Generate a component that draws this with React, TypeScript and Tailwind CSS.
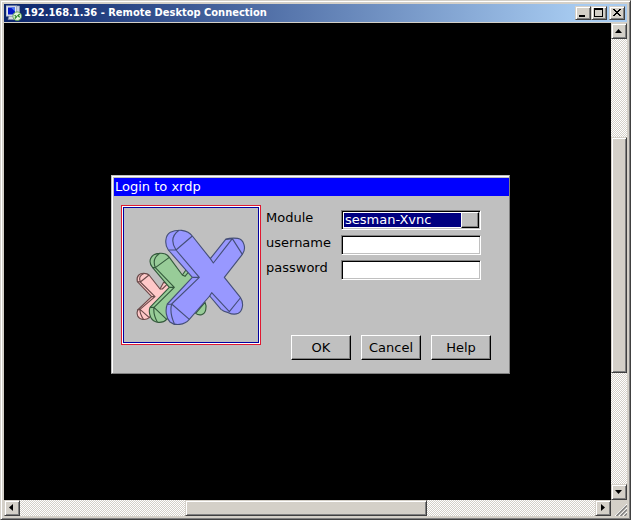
import type { ReactNode } from 'react';

const RAISED =
  'border border-t-[#d4d0c8] border-l-[#d4d0c8] border-r-[#404040] border-b-[#404040] bg-[#d4d0c8] shadow-[inset_1px_1px_#fff,inset_-1px_-1px_#808080]';

const TRACK =
  'bg-[#fff] bg-[repeating-conic-gradient(#d4d0c8_0_25%,#fff_0_50%)] bg-[length:2px_2px]';

const FIELD =
  'w-[140px] h-5 border border-t-[#808080] border-l-[#808080] border-r-white border-b-white shadow-[inset_1px_1px_#000,inset_-1px_-1px_#c0c0c0]';

function ComputerIcon() {
  return (
    <svg viewBox="0 0 16 16" className="size-4 shrink-0" aria-hidden="true">
      <path d="M2 14.5h8l-1-3H3z" fill="#d4d8e0" stroke="#8a94a8" strokeWidth=".6" />
      <rect x=".5" y="1" width="10" height="10" fill="#dfe6f2" stroke="#b8c0d0" />
      <path d="M10.5 1h3v10h-3z" fill="#c5cde0" stroke="#8f9ab4" strokeWidth=".6" />
      <rect x="2" y="2.5" width="7" height="7" fill="#0818c8" />
      <path d="M5 2.5h4v4z" fill="#4f78f4" />
      <circle cx="11.2" cy="11.2" r="4.3" fill="#e4f2dc" stroke="#58a048" strokeWidth=".9" />
      <path
        d="M8.6 10.2l1.9 1.6-1.7 1.7M13.7 9l-1.8 1.7 1.9 1.6"
        fill="none"
        stroke="#2f8a28"
        strokeWidth="1.3"
      />
    </svg>
  );
}

function CaptionButton({ label, children }: { label: string; children: ReactNode }) {
  return (
    <button type="button" aria-label={label} className={`w-4 h-[14px] ${RAISED}`}>
      <svg
        viewBox="0 0 14 12"
        className="block w-full h-full"
        shapeRendering="crispEdges"
        aria-hidden="true"
      >
        {children}
      </svg>
    </button>
  );
}

function ArrowButton({ label, points }: { label: string; points: string }) {
  return (
    <button type="button" aria-label={label} className={`size-4 shrink-0 ${RAISED}`}>
      <svg viewBox="0 0 14 14" className="block w-full h-full" aria-hidden="true">
        <polygon points={points} fill="#000" />
      </svg>
    </button>
  );
}

function XrdpLogo() {
  return (
    <svg
      viewBox="57 114 402 402"
      className="block w-full h-full"
      strokeWidth="3.4"
      strokeLinejoin="round"
      role="img"
      aria-label="xrdp"
    >
      <g fill="#ffc8c8" stroke="#6b4a4a">
        <path d="M97 335C93 318 104 309 118 310Q127 310 132 315L165 357L176 337L187 340L200 352L150 420L133 443C122 452 104 450 98 438Q94 430 98 420L140 380Z" />
        <path
          d="M118 310Q98 318 106 336L150 380L105 418Q104 432 116 449M106 336L132 315M105 418L133 443M97 335L106 336M140 380H150M165 357L172 357L189 340M97 420L105 418"
          fill="none"
        />
      </g>
      <g fill="#98cc98" stroke="#345a3c">
        <path d="M143 293C128 275 135 252 163 250Q183 248 193 262L232 315L245 297L290 340L185 448C172 462 146 460 137 442Q130 425 135 412L193 352Z" />
        <path
          d="M165 250Q140 264 151 293L208 352L147 412Q144 432 157 456M151 293L193 262M147 412L185 448M143 293H151M193 352H208M232 315L240 319L253 303M135 412H147"
          fill="none"
        />
        <path d="M272 430L300 397C307 411 302 431 290 434Q280 436 272 430Z" />
      </g>
      <g fill="#9898ff" stroke="#454f78">
        <path d="M190 240C178 224 180 196 196 187Q210 180 230 181Q252 184 262 198L316 266L362 208Q375 203 398 205C417 208 425 236 412 253L358 322L406 382C417 398 414 421 400 430Q386 436 370 428Q355 424 348 418L314 378L253 448C238 466 209 468 195 456C183 444 180 419 187 402L262 322Z" />
        <path
          d="M222 181Q190 204 213 240L283 322L200 402Q193 428 208 461M213 240L262 198M200 402L253 448M190 240L213 240M262 322H283M187 403L200 402M316 266L325 279L382 206L412 253M362 208L382 206M314 378L320 368L373 425L406 384"
          fill="none"
        />
      </g>
    </svg>
  );
}

function DialogButton({ children, submit }: { children: ReactNode; submit?: boolean }) {
  return (
    <button
      type={submit ? 'submit' : 'button'}
      className="w-[60px] h-[25px] border border-t-white border-l-white border-r-black border-b-black shadow-[inset_-1px_-1px_#808080]"
    >
      {children}
    </button>
  );
}

function LoginDialog() {
  return (
    <section
      aria-labelledby="login-title"
      className="w-[399px] border border-t-[#c0c0c0] border-l-[#c0c0c0] border-r-[#808080] border-b-[#808080] bg-[#c0c0c0] pt-0.5 pl-0.5 shadow-[inset_1px_1px_#fff] text-[13px] leading-[18px] text-black font-['DejaVu_Sans',sans-serif]"
    >
      <h2 id="login-title" className="h-[18px] bg-[#0000ff] pl-px text-white">
        Login to xrdp
      </h2>
      <form
        className="flex gap-[5px] pt-[9px] pl-[7px] pb-[13px]"
        onSubmit={(e) => e.preventDefault()}
      >
        <div className="size-[140px] shrink-0 border border-[#e01830] bg-white p-px">
          <div className="h-full border border-[#0000a0] bg-[#c0c0c0]">
            <XrdpLogo />
          </div>
        </div>
        <div className="flex flex-col pt-[5px]">
          <div className="grid grid-cols-[75px_140px] gap-y-[5px]">
            <label htmlFor="module" className="-mt-px">
              Module
            </label>
            <div className={`relative p-px ${FIELD}`}>
              <select
                id="module"
                className="block w-full h-full appearance-none border border-white bg-[#000080] pl-px leading-[14px] text-white outline-none"
              >
                <option>sesman-Xvnc</option>
              </select>
              <span className="pointer-events-none absolute top-px right-px h-4 w-[18px] border border-t-white border-l-white border-r-black border-b-black bg-[#c0c0c0] shadow-[inset_-1px_-1px_#808080]" />
            </div>
            <label htmlFor="username" className="-mt-px">
              username
            </label>
            <input id="username" type="text" className={`bg-white px-1 outline-none ${FIELD}`} />
            <label htmlFor="password" className="-mt-px">
              password
            </label>
            <input id="password" type="password" className={`bg-white px-1 outline-none ${FIELD}`} />
          </div>
          <div className="mt-[55px] ml-[25px] flex gap-2.5">
            <DialogButton submit>OK</DialogButton>
            <DialogButton>Cancel</DialogButton>
            <DialogButton>Help</DialogButton>
          </div>
        </div>
      </form>
    </section>
  );
}

export default function App() {
  return (
    <div className="flex flex-col w-full h-screen border border-t-[#d4d0c8] border-l-[#d4d0c8] border-r-[#404040] border-b-[#404040] bg-[#d4d0c8] p-[3px] shadow-[inset_1px_1px_#fff,inset_-1px_-1px_#808080]">
      <header className="flex items-center h-[18px] mb-px px-0.5 shrink-0 bg-linear-to-r/srgb from-[#0a246a] to-[#a6caf0] to-92%">
        <ComputerIcon />
        <h1 className="ml-0.5 grow whitespace-nowrap text-[11px] leading-[18px] font-bold text-white font-['DejaVu_Sans_Condensed','DejaVu_Sans',sans-serif]">
          192.168.1.36 - Remote Desktop Connection
        </h1>
        <div className="flex">
          <CaptionButton label="Minimize">
            <path d="M3 8h6v2H3z" />
          </CaptionButton>
          <CaptionButton label="Maximize">
            <path d="M2 1h9v9H2zM3 3v6h7V3z" fillRule="evenodd" />
          </CaptionButton>
        </div>
        <div className="flex ml-0.5">
          <CaptionButton label="Close">
            <path d="M3 2h2v1h1v1h2V3h1V2h2v1h-1v1H9v1H8v1h1v1h1v1h1v1H9V8H8V7H6v1H5v1H3V8h1V7h1V6h1V5H5V4H4V3H3z" />
          </CaptionButton>
        </div>
      </header>

      <div className="grid grow min-h-0 grid-cols-[minmax(0,1fr)_16px] grid-rows-[minmax(0,1fr)_16px]">
        <main className="flex items-center justify-center overflow-hidden bg-black pt-[26px] pl-1.5">
          <LoginDialog />
        </main>
        <div className={`flex flex-col ${TRACK}`}>
          <ArrowButton label="Scroll up" points="3,9 10,9 6.5,5" />
          <div className="flex-[98]" />
          <div className={`flex-[235] ${RAISED}`} />
          <div className="flex-[111]" />
          <ArrowButton label="Scroll down" points="3,5 10,5 6.5,9" />
        </div>
        <div className={`flex ${TRACK}`}>
          <ArrowButton label="Scroll left" points="8,3 8,10 4,6.5" />
          <div className="flex-[165]" />
          <div className={`flex-[240] ${RAISED}`} />
          <div className="flex-[168]" />
          <ArrowButton label="Scroll right" points="5,3 5,10 9,6.5" />
        </div>
        <svg viewBox="0 0 16 16" className="size-4" aria-hidden="true">
          <path d="M4 16L16 4M8 16l8-8M12 16l4-4" stroke="#fff" />
          <path d="M5.5 16L16 5.5M9.5 16L16 9.5M13.5 16l2.5-2.5" stroke="#808080" strokeWidth="1.5" />
        </svg>
      </div>
    </div>
  );
}
